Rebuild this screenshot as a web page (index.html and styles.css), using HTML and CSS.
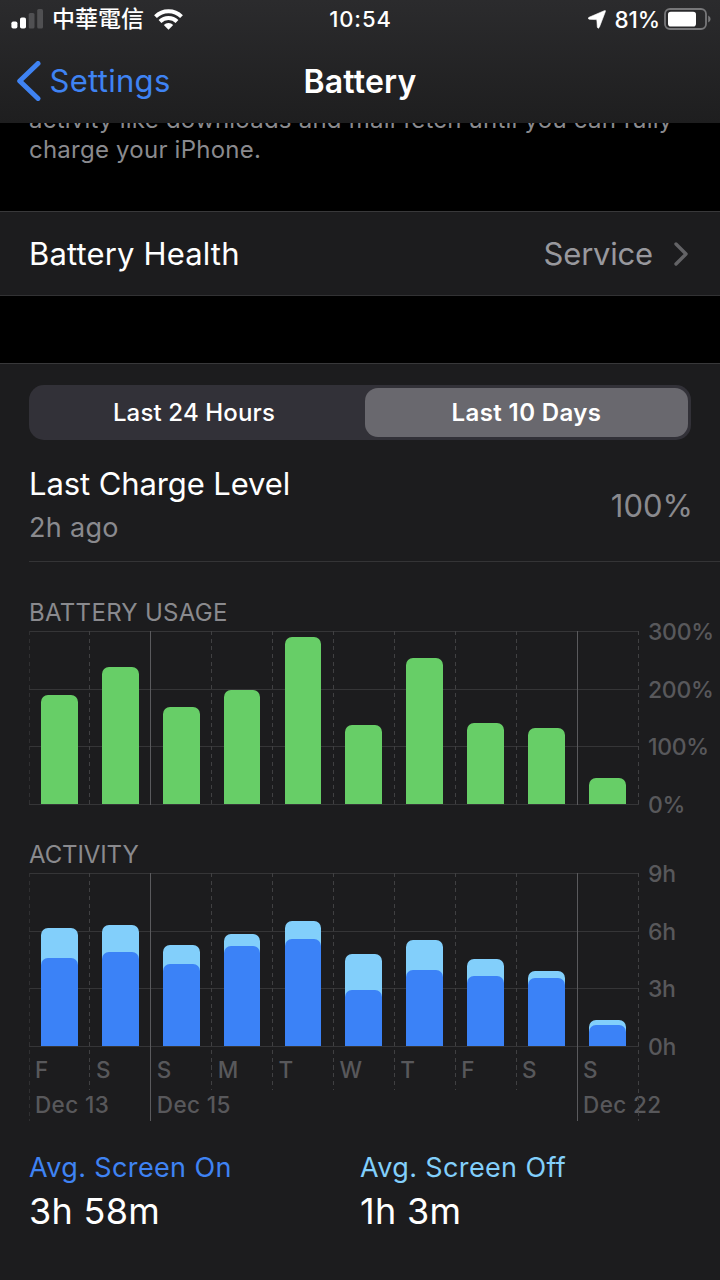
FILE: index.html
```html
<!DOCTYPE html>
<html lang="en">
<head>
    <meta charset="UTF-8">
    <meta name="viewport" content="width=device-width, initial-scale=1.0">
    <title>Battery</title>
    <link rel="stylesheet" href="styles.css">
</head>
<body>
    <header class="header">
        <div class="status-bar">
            <div class="status-left">
                <svg class="signal" width="32" height="20" viewBox="0 0 32 20">
                    <rect x="0.4" y="12.5" width="6" height="7" rx="1.8" fill="#fff"/>
                    <rect x="9" y="8.5" width="6" height="11" rx="1.8" fill="#fff"/>
                    <rect x="17.7" y="4" width="5.8" height="15.5" rx="1.5" fill="#505052"/>
                    <rect x="26.2" y="0" width="5.8" height="19.5" rx="1.5" fill="#505052"/>
                </svg>
                <span class="carrier">中華電信</span>
                <svg class="wifi" width="29" height="21" viewBox="0 0 29 21">
                    <g fill="none" stroke="#fff" stroke-width="4">
                        <path d="M1.5 7.6 A18.6 18.6 0 0 1 27.5 7.6"/>
                        <path d="M6 12.5 A12.2 12.2 0 0 1 23 12.5"/>
                    </g>
                    <path d="M14.5 20.8 L9.8 16 A6.6 6.6 0 0 1 19.2 16 Z" fill="#fff"/>
                </svg>
            </div>
            <div class="status-time">10:54</div>
            <div class="status-right">
                <svg class="location" width="18" height="19" viewBox="0 0 18 19">
                    <path d="M16.3 0.7 Q18 0 17.3 1.8 L11.4 17.2 Q10.2 19.4 9.3 17.2 L8.9 10.6 Q8.8 9.7 7.9 9.6 L1.2 9.3 Q-0.9 8.4 1 7.3 Z" fill="#fff" stroke="#fff" stroke-width="0.6"/>
                </svg>
                <span class="percent">81%</span>
                <svg class="battery" width="47" height="22" viewBox="0 0 47 22">
                    <rect x="1" y="1" width="41" height="20" rx="5" fill="none" stroke="#777779" stroke-width="1.8"/>
                    <rect x="4" y="3.7" width="28" height="14.8" rx="2.8" fill="#fff"/>
                    <path d="M44.2 7.5 Q46.6 8.5 46.6 11 Q46.6 13.5 44.2 14.5 Z" fill="#777779"/>
                </svg>
            </div>
        </div>
        <div class="nav-bar">
            <a class="back" href="#">
                <svg width="25" height="40" viewBox="0 0 25 40">
                    <path d="M22 2.5 L3.7 20 L22 37.5" fill="none" stroke="#3f83f3" stroke-width="5" stroke-linecap="round" stroke-linejoin="round"/>
                </svg>
                <span class="back-text">Settings</span>
            </a>
            <h1 class="title">Battery</h1>
        </div>
    </header>

    <div class="note">
        <p class="note-first">activity like downloads and mail fetch until you can fully</p>
        <p class="note-second">charge your iPhone.</p>
    </div>

    <div class="row health">
        <span class="row-label">Battery Health</span>
        <span class="row-value">Service</span>
        <svg class="chevron" width="14" height="24" viewBox="0 0 14 24">
            <path d="M2 2 L12 12 L2 22" fill="none" stroke="#636366" stroke-width="3.4" stroke-linecap="round" stroke-linejoin="round"/>
        </svg>
    </div>

    <main class="panel">
        <div class="segments">
            <button type="button" class="segment">Last 24 Hours</button>
            <button type="button" class="segment selected">Last 10 Days</button>
        </div>

        <div class="charge">
            <div>
                <div class="charge-label">Last Charge Level</div>
                <div class="charge-time">2h ago</div>
            </div>
            <div class="charge-value">100%</div>
        </div>

        <h2 class="chart-title usage-title">BATTERY USAGE</h2>
        <div class="chart usage">
            <div class="plot">
                <div class="day edge"><div class="bars"><div class="bar" style="height: 109px"></div></div></div>
                <div class="day"><div class="bars"><div class="bar" style="height: 137px"></div></div></div>
                <div class="day week"><div class="bars"><div class="bar" style="height: 97px"></div></div></div>
                <div class="day"><div class="bars"><div class="bar" style="height: 114.5px"></div></div></div>
                <div class="day"><div class="bars"><div class="bar" style="height: 167.5px"></div></div></div>
                <div class="day"><div class="bars"><div class="bar" style="height: 79px"></div></div></div>
                <div class="day"><div class="bars"><div class="bar" style="height: 146px"></div></div></div>
                <div class="day"><div class="bars"><div class="bar" style="height: 81px"></div></div></div>
                <div class="day"><div class="bars"><div class="bar" style="height: 76px"></div></div></div>
                <div class="day week"><div class="bars"><div class="bar" style="height: 26px"></div></div></div>
                <div class="day end"></div>
            </div>
            <div class="axis">
                <span>300%</span>
                <span>200%</span>
                <span>100%</span>
                <span>0%</span>
            </div>
        </div>

        <h2 class="chart-title activity-title">ACTIVITY</h2>
        <div class="chart activity">
            <div class="plot">
                <div class="day edge">
                    <div class="bars"><div class="bar off" style="height: 118.5px"><div class="on" style="height: 88.5px"></div></div></div>
                    <span class="weekday">F</span>
                    <span class="date">Dec 13</span>
                </div>
                <div class="day">
                    <div class="bars"><div class="bar off" style="height: 121px"><div class="on" style="height: 94px"></div></div></div>
                    <span class="weekday">S</span>
                </div>
                <div class="day week">
                    <div class="bars"><div class="bar off" style="height: 101px"><div class="on" style="height: 82px"></div></div></div>
                    <span class="weekday">S</span>
                    <span class="date">Dec 15</span>
                </div>
                <div class="day">
                    <div class="bars"><div class="bar off" style="height: 112.5px"><div class="on" style="height: 100px"></div></div></div>
                    <span class="weekday">M</span>
                </div>
                <div class="day">
                    <div class="bars"><div class="bar off" style="height: 125.5px"><div class="on" style="height: 107px"></div></div></div>
                    <span class="weekday">T</span>
                </div>
                <div class="day">
                    <div class="bars"><div class="bar off" style="height: 92px"><div class="on" style="height: 56px"></div></div></div>
                    <span class="weekday">W</span>
                </div>
                <div class="day">
                    <div class="bars"><div class="bar off" style="height: 106px"><div class="on" style="height: 76.5px"></div></div></div>
                    <span class="weekday">T</span>
                </div>
                <div class="day">
                    <div class="bars"><div class="bar off" style="height: 87.5px"><div class="on" style="height: 70.5px"></div></div></div>
                    <span class="weekday">F</span>
                </div>
                <div class="day">
                    <div class="bars"><div class="bar off" style="height: 75.5px"><div class="on" style="height: 68px"></div></div></div>
                    <span class="weekday">S</span>
                </div>
                <div class="day week">
                    <div class="bars"><div class="bar off" style="height: 26px"><div class="on" style="height: 21px"></div></div></div>
                    <span class="weekday">S</span>
                    <span class="date">Dec 22</span>
                </div>
                <div class="day end"></div>
            </div>
            <div class="axis">
                <span>9h</span>
                <span>6h</span>
                <span>3h</span>
                <span>0h</span>
            </div>
        </div>

        <div class="averages">
            <div class="average">
                <div class="average-label screen-on">Avg. Screen On</div>
                <div class="average-value">3h 58m</div>
            </div>
            <div class="average">
                <div class="average-label screen-off">Avg. Screen Off</div>
                <div class="average-value">1h 3m</div>
            </div>
        </div>
    </main>
</body>
</html>
```
FILE: styles.css
```css
* {
    box-sizing: border-box;
}
body {
    margin: 0;
    width: 720px;
    height: 1280px;
    overflow: hidden;
    display: flex;
    flex-direction: column;
    background-color: #000;
    color: #fff;
    font-family: Inter, "Noto Sans CJK TC", sans-serif;
    white-space: nowrap;
}
h1, h2, p {
    margin: 0;
    font-weight: 400;
}
svg {
    display: block;
    flex: none;
}

/* header */
.header {
    flex: none;
    height: 123px;
    background: linear-gradient(#2b2b2d, #1e1e1f);
}
.status-bar {
    display: grid;
    grid-template-columns: 1fr 80px 1fr;
    align-items: center;
    height: 38px;
    padding: 0 10px 0 11px;
    font-size: 22px;
    font-weight: 500;
}
.status-left, .status-right {
    display: flex;
    align-items: center;
}
.status-right {
    justify-content: flex-end;
}
.carrier {
    margin-left: 9px;
    font-size: 23px;
    line-height: 38px;
}
.wifi {
    margin-left: 10px;
}
.status-time {
    text-align: center;
    letter-spacing: 0.9px;
}
.percent {
    margin: 0 4px 0 8px;
    font-size: 22.5px;
    letter-spacing: -0.1px;
}
.battery {
    margin-right: -1px;
}
.nav-bar {
    display: grid;
    grid-template-columns: 1fr auto 1fr;
    align-items: center;
    height: 85px;
    padding: 0 16px;
}
.back {
    display: flex;
    align-items: center;
    gap: 8.5px;
    color: #3f83f3;
    font-size: 31px;
    letter-spacing: 0.3px;
    text-decoration: none;
}
.title {
    padding-top: 1px;
    font-size: 32px;
    font-weight: 600;
    letter-spacing: 0.2px;
}

/* explanation above the rows, scrolled partly under the header */
.note {
    flex: none;
    height: 88px;
    overflow: hidden;
    padding-left: 29px;
    color: #8a8a8e;
    font-size: 24px;
    letter-spacing: 0.23px;
    line-height: 30px;
}
.note-first {
    margin-top: -18px;
}

.row {
    flex: none;
    display: flex;
    align-items: center;
    height: 85px;
    padding: 0 32px 0 29px;
    border-top: 1px solid #38383a;
    border-bottom: 1px solid #323234;
    background-color: #1c1c1e;
    font-size: 31px;
    letter-spacing: 0.15px;
}
.row-value {
    margin-left: auto;
    color: #98989d;
    letter-spacing: -0.2px;
}
.chevron {
    margin-left: 21px;
}

.panel {
    flex: 1;
    margin-top: 67px;
    border-top: 1px solid #38383a;
    background-color: #1c1c1e;
}
.segments {
    display: flex;
    width: 662px;
    height: 55px;
    margin: 21px 0 0 29px;
    padding: 3px;
    border-radius: 15px;
    background-color: #323138;
}
.segment {
    flex: 1;
    padding: 0 9px 0 0;
    border: none;
    border-radius: 13px;
    background: none;
    color: #fff;
    font-family: inherit;
    font-size: 24px;
    font-weight: 500;
    letter-spacing: 0.15px;
}
.segment.selected {
    flex: 0 0 323px;
    padding: 0;
    background-color: #69686e;
    font-weight: 600;
    letter-spacing: 0.4px;
}

.charge {
    display: flex;
    align-items: center;
    justify-content: space-between;
    height: 122px;
    margin-left: 29px;
    padding: 10px 27px 0 0;
    border-bottom: 1px solid #343436;
    font-size: 31px;
}
.charge-label {
    line-height: 43px;
    letter-spacing: -0.1px;
}
.charge-time {
    padding-top: 1px;
    color: #8a8a8e;
    font-size: 27px;
    letter-spacing: 0.3px;
    line-height: 43px;
}
.charge-value {
    padding-bottom: 1px;
    color: #8a8a8e;
}

/* charts */
.chart-title {
    padding-left: 29px;
    color: #8a8a8e;
    font-size: 24px;
    line-height: 30px;
}
.usage-title {
    margin-top: 36px;
    letter-spacing: 0.3px;
}
.activity-title {
    margin-top: 35px;
    letter-spacing: -0.1px;
}
.chart {
    display: flex;
    margin: 3px 0 0 28.6px;
}
.usage {
    height: 174px;
}
.activity {
    height: 248px;
}
.plot {
    display: flex;
    width: 610px;
    background:
        linear-gradient(#353537, #353537) 0 0 / 100% 1px no-repeat,
        linear-gradient(#353537, #353537) 0 58px / 100% 1px no-repeat,
        linear-gradient(#353537, #353537) 0 115px / 100% 1px no-repeat,
        linear-gradient(#353537, #353537) 0 173px / 100% 1px no-repeat;
}
.day {
    flex: none;
    width: 60.9px;
    background: repeating-linear-gradient(#404042 0 4px, transparent 4px 7.7px) 0 0 / 1px 217px no-repeat;
}
.day.week {
    background: linear-gradient(#5a5a5d, #5a5a5d) 0 0 / 1px 100% no-repeat;
}
.day.edge {
    background: repeating-linear-gradient(#2f2f31 0 4px, transparent 4px 7.7px) 0 0 / 1px 100% no-repeat;
}
.day.end {
    width: 1px;
    background-size: 1px 100%;
}
.bars {
    display: flex;
    align-items: flex-end;
    height: 173px;
    padding-left: 12.4px;
}
.bar {
    display: flex;
    align-items: flex-end;
    width: 36.8px;
    border-radius: 7px 7px 0 0;
    background-color: #67ce67;
}
.bar.off {
    background-color: #82cffb;
}
.on {
    width: 100%;
    border-radius: 7px 7px 0 0;
    background-color: #3b82f7;
}
.weekday, .date {
    display: block;
    padding-left: 6.4px;
    color: #58585b;
    font-size: 22.5px;
    font-weight: 500;
    line-height: 35px;
}
.weekday {
    padding-top: 6px;
}
.date {
    letter-spacing: 0.4px;
}
.axis {
    display: flex;
    flex-direction: column;
    justify-content: space-between;
    height: 202px;
    margin: -13px 0 0 9.4px;
    color: #58585b;
    font-size: 23px;
    font-weight: 500;
    letter-spacing: -0.3px;
    line-height: 29px;
}

.averages {
    display: grid;
    grid-template-columns: 331px 1fr;
    margin: 28px 0 0 29px;
}
.average-label {
    font-size: 27px;
    letter-spacing: 0.38px;
    line-height: 38px;
}
.screen-on {
    color: #3f83f3;
}
.screen-off {
    color: #82cffb;
}
.average-value {
    font-size: 36px;
    letter-spacing: 0.3px;
    line-height: 49px;
}
```
